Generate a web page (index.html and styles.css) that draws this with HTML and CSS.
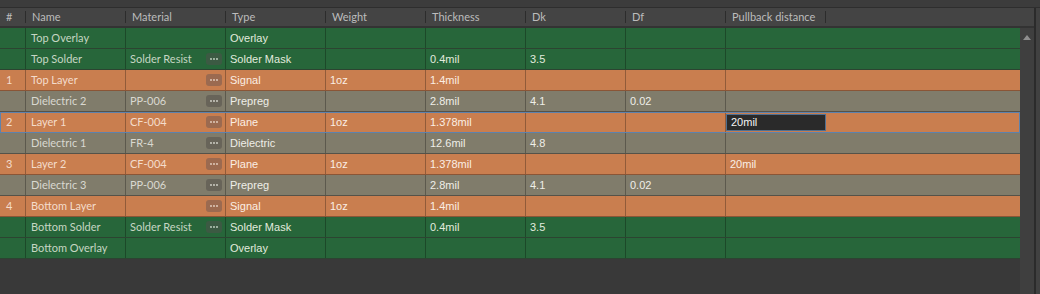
FILE: index.html
```html
<!DOCTYPE html>
<html>
<head>
<meta charset="utf-8">
<link rel="stylesheet" href="styles.css">
</head>
<body>
<div class="app">
  <div class="topstrip"></div>
  <div class="main">
    <div class="gridwrap">
      <div class="header">
        <div class="hc">#</div>
        <div class="hc">Name</div>
        <div class="hc">Material</div>
        <div class="hc">Type</div>
        <div class="hc">Weight</div>
        <div class="hc">Thickness</div>
        <div class="hc">Dk</div>
        <div class="hc">Df</div>
        <div class="hc">Pullback distance</div>
        <div class="hc blank"></div>
      </div>
      <div class="bodyarea">
        <div class="rows">
          <div class="row green">
            <div class="c num"></div><div class="c name">Top Overlay</div><div class="c mat"></div><div class="c t">Overlay</div><div class="c t"></div><div class="c t"></div><div class="c t"></div><div class="c t"></div><div class="c t last"></div>
          </div>
          <div class="row green">
            <div class="c num"></div><div class="c name">Top Solder</div><div class="c mat"><span>Solder Resist</span><i class="dots"><svg width="8" height="2" viewBox="0 0 8 2"><circle cx="1" cy="1" r="0.9"/><circle cx="4" cy="1" r="0.9"/><circle cx="7" cy="1" r="0.9"/></svg></i></div><div class="c t">Solder Mask</div><div class="c t"></div><div class="c t">0.4mil</div><div class="c t">3.5</div><div class="c t"></div><div class="c t last"></div>
          </div>
          <div class="row orange">
            <div class="c num">1</div><div class="c name">Top Layer</div><div class="c mat"><span></span><i class="dots"><svg width="8" height="2" viewBox="0 0 8 2"><circle cx="1" cy="1" r="0.9"/><circle cx="4" cy="1" r="0.9"/><circle cx="7" cy="1" r="0.9"/></svg></i></div><div class="c t">Signal</div><div class="c t">1oz</div><div class="c t">1.4mil</div><div class="c t"></div><div class="c t"></div><div class="c t last"></div>
          </div>
          <div class="row gray">
            <div class="c num"></div><div class="c name">Dielectric 2</div><div class="c mat"><span>PP-006</span><i class="dots"><svg width="8" height="2" viewBox="0 0 8 2"><circle cx="1" cy="1" r="0.9"/><circle cx="4" cy="1" r="0.9"/><circle cx="7" cy="1" r="0.9"/></svg></i></div><div class="c t">Prepreg</div><div class="c t"></div><div class="c t">2.8mil</div><div class="c t">4.1</div><div class="c t">0.02</div><div class="c t last"></div>
          </div>
          <div class="row orange selected">
            <div class="c num">2</div><div class="c name">Layer 1</div><div class="c mat"><span>CF-004</span><i class="dots"><svg width="8" height="2" viewBox="0 0 8 2"><circle cx="1" cy="1" r="0.9"/><circle cx="4" cy="1" r="0.9"/><circle cx="7" cy="1" r="0.9"/></svg></i></div><div class="c t">Plane</div><div class="c t">1oz</div><div class="c t">1.378mil</div><div class="c t"></div><div class="c t"></div><div class="c t last"><div class="editor">20mil</div></div>
          </div>
          <div class="row gray">
            <div class="c num"></div><div class="c name">Dielectric 1</div><div class="c mat"><span>FR-4</span><i class="dots"><svg width="8" height="2" viewBox="0 0 8 2"><circle cx="1" cy="1" r="0.9"/><circle cx="4" cy="1" r="0.9"/><circle cx="7" cy="1" r="0.9"/></svg></i></div><div class="c t">Dielectric</div><div class="c t"></div><div class="c t">12.6mil</div><div class="c t">4.8</div><div class="c t"></div><div class="c t last"></div>
          </div>
          <div class="row orange">
            <div class="c num">3</div><div class="c name">Layer 2</div><div class="c mat"><span>CF-004</span><i class="dots"><svg width="8" height="2" viewBox="0 0 8 2"><circle cx="1" cy="1" r="0.9"/><circle cx="4" cy="1" r="0.9"/><circle cx="7" cy="1" r="0.9"/></svg></i></div><div class="c t">Plane</div><div class="c t">1oz</div><div class="c t">1.378mil</div><div class="c t"></div><div class="c t"></div><div class="c t last">20mil</div>
          </div>
          <div class="row gray">
            <div class="c num"></div><div class="c name">Dielectric 3</div><div class="c mat"><span>PP-006</span><i class="dots"><svg width="8" height="2" viewBox="0 0 8 2"><circle cx="1" cy="1" r="0.9"/><circle cx="4" cy="1" r="0.9"/><circle cx="7" cy="1" r="0.9"/></svg></i></div><div class="c t">Prepreg</div><div class="c t"></div><div class="c t">2.8mil</div><div class="c t">4.1</div><div class="c t">0.02</div><div class="c t last"></div>
          </div>
          <div class="row orange">
            <div class="c num">4</div><div class="c name">Bottom Layer</div><div class="c mat"><span></span><i class="dots"><svg width="8" height="2" viewBox="0 0 8 2"><circle cx="1" cy="1" r="0.9"/><circle cx="4" cy="1" r="0.9"/><circle cx="7" cy="1" r="0.9"/></svg></i></div><div class="c t">Signal</div><div class="c t">1oz</div><div class="c t">1.4mil</div><div class="c t"></div><div class="c t"></div><div class="c t last"></div>
          </div>
          <div class="row green">
            <div class="c num"></div><div class="c name">Bottom Solder</div><div class="c mat"><span>Solder Resist</span><i class="dots"><svg width="8" height="2" viewBox="0 0 8 2"><circle cx="1" cy="1" r="0.9"/><circle cx="4" cy="1" r="0.9"/><circle cx="7" cy="1" r="0.9"/></svg></i></div><div class="c t">Solder Mask</div><div class="c t"></div><div class="c t">0.4mil</div><div class="c t">3.5</div><div class="c t"></div><div class="c t last"></div>
          </div>
          <div class="row green">
            <div class="c num"></div><div class="c name">Bottom Overlay</div><div class="c mat"></div><div class="c t">Overlay</div><div class="c t"></div><div class="c t"></div><div class="c t"></div><div class="c t"></div><div class="c t last"></div>
          </div>
        </div>
        <div class="vscroll"><div class="uparrow"></div></div>
      </div>
    </div>
    <div class="divider"></div>
    <div class="rightstrip"></div>
  </div>
</div>
</body>
</html>
```

FILE: styles.css
```css
html, body {
  margin: 0;
  padding: 0;
  background: #393939;
  width: 1040px;
  height: 294px;
  overflow: hidden;
}
.app {
  display: flex;
  flex-direction: column;
  height: 294px;
  font-family: Lato, "Open Sans", sans-serif;
  font-size: 11px;
}
.topstrip {
  height: 7px;
  background: #3c3c3c;
  border-bottom: 1px solid #2e2e2e;
}
.main {
  display: flex;
  flex: 1;
}
.gridwrap {
  width: 1034px;
  display: flex;
  flex-direction: column;
}
.header {
  display: grid;
  grid-template-columns: 26px 100px 100px 100px 100px 100px 100px 100px 100px 208px;
  height: 18px;
  background: #444444;
  border-bottom: 2px solid #333333;
}
.hc {
  color: #bcbcbc;
  padding-left: 6px;
  line-height: 18px;
  position: relative;
  white-space: nowrap;
}
.hc::after {
  content: "";
  position: absolute;
  right: 0;
  top: 3px;
  bottom: 3px;
  width: 1px;
  background: #2c2c2c;
}
.hc.blank::after { display: none; }
.bodyarea {
  display: flex;
  flex: 1;
}
.rows {
  width: 1020px;
  display: flex;
  flex-direction: column;
}
.vscroll {
  width: 14px;
  background: #3f3f3f;
  display: flex;
  justify-content: center;
  padding-top: 7px;
  box-sizing: border-box;
}
.uparrow {
  width: 0;
  height: 0;
  border-left: 4px solid transparent;
  border-right: 4px solid transparent;
  border-bottom: 5px solid #8e8e8e;
}
.divider {
  width: 2px;
  background: #2b2b2b;
}
.rightstrip {
  flex: 1;
  background: #414141;
}
.row {
  display: grid;
  grid-template-columns: 26px 100px 100px 100px 100px 100px 100px 100px 294px;
  height: 20px;
  border-bottom: 1px solid #2f3a31;
  box-sizing: content-box;
}
.c {
  line-height: 20px;
  white-space: nowrap;
  overflow: hidden;
  border-right: 1px solid rgba(0,0,0,0.28);
  padding-left: 4px;
  display: flex;
  align-items: center;
}
.c.last { border-right: none; }
.c.num { padding-left: 6px; }
.c.name { padding-left: 5px; }
.c.mat { padding-left: 4px; padding-right: 3px; justify-content: space-between; }
.c.t {
  font-family: "Liberation Sans", Arial, sans-serif;
  font-size: 11px;
}
.dots {
  width: 16px;
  height: 12px;
  border-radius: 3px;
  display: flex;
  align-items: center;
  justify-content: center;
}
.dots svg { display: block; }
.green { background: #27663a; border-bottom-color: #2c4431; }
.green .c { color: #c6d6c3; }
.green .c.t { color: #e2ebde; }
.green .dots { background: #3c5a43; fill: #c8d8c8; }
.orange { background: #c97e4f; border-bottom-color: #8a5536; }
.orange .c { color: #f4dccb; }
.orange .c.t { color: #fbeee4; }
.orange .dots { background: #9b6a50; fill: #e8d4c6; }
.gray { background: #807c6b; border-bottom-color: #555249; }
.gray .c { color: #d9d8d0; }
.gray .c.t { color: #efeee8; }
.gray .dots { background: #686459; fill: #d9d8d0; }
.selected {
  outline: 1px solid #5d82ad;
  outline-offset: -1px;
}
.editor {
  margin-left: -4px;
  width: 100px;
  height: 17px;
  background: #2a2a2a;
  border: 1px solid #4f6f90;
  box-sizing: border-box;
  color: #f4f4f4;
  padding-left: 4px;
  line-height: 15px;
}
```
